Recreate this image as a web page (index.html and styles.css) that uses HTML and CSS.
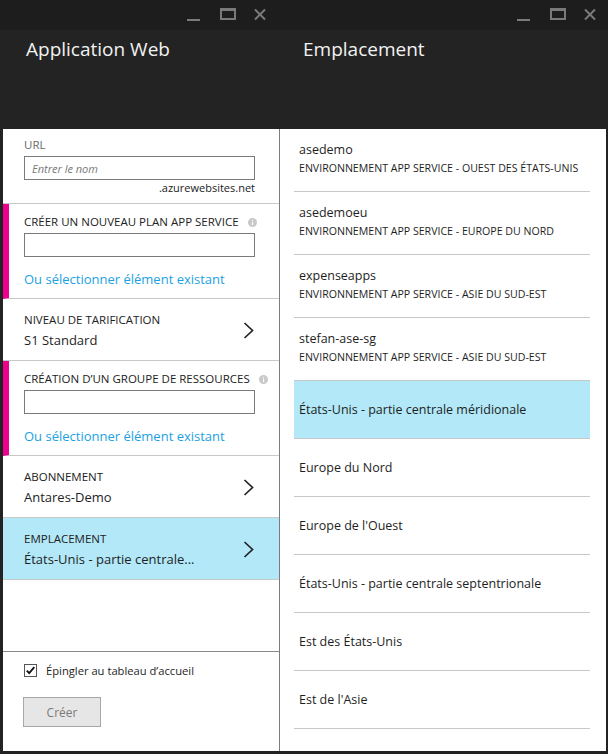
FILE: index.html
```html
<!DOCTYPE html>
<html lang="fr">
<head>
<meta charset="utf-8">
<title>Application Web</title>
<link rel="stylesheet" href="styles.css">
</head>
<body>
<div class="page">
  <section class="blade blade-form">
    <header class="blade-header">
      <div class="topbar">
        <svg class="controls controls-left" width="80" height="30" viewBox="0 0 80 30">
          <rect x="0" y="19" width="13" height="2" fill="#7a7a7a"/>
          <rect x="34" y="9" width="14" height="10" fill="none" stroke="#7a7a7a" stroke-width="2"/>
          <rect x="33" y="8" width="16" height="3" fill="#7a7a7a"/>
          <path d="M68 9.5 L78 19.5 M78 9.5 L68 19.5" stroke="#7a7a7a" stroke-width="2"/>
        </svg>
      </div>
      <h1 class="blade-title">Application Web</h1>
    </header>
    <div class="blade-body form-body">
      <div class="field field-url">
        <div class="label label-muted">URL</div>
        <div class="input"><span class="placeholder">Entrer le nom</span></div>
        <div class="suffix">.azurewebsites.net</div>
      </div>
      <div class="field field-required">
        <div class="label-row">
          <span class="label">CRÉER UN NOUVEAU PLAN APP SERVICE</span>
          <svg class="info" width="9" height="9" viewBox="0 0 9 9"><circle cx="4.5" cy="4.5" r="4.5" fill="#c9c9c9"/><rect x="4" y="3.8" width="1.1" height="3.3" fill="#fff"/><rect x="4" y="1.9" width="1.1" height="1.1" fill="#fff"/></svg>
        </div>
        <div class="input"></div>
        <a class="link">Ou sélectionner élément existant</a>
      </div>
      <div class="nav-row">
        <div class="nav-text">
          <div class="label">NIVEAU DE TARIFICATION</div>
          <div class="value">S1 Standard</div>
        </div>
        <svg class="chevron" width="11" height="17" viewBox="0 0 11 17"><path d="M1.5 1 L9.5 8.5 L1.5 16" fill="none" stroke="#222" stroke-width="1.7"/></svg>
      </div>
      <div class="field field-required">
        <div class="label-row">
          <span class="label">CRÉATION D’UN GROUPE DE RESSOURCES</span>
          <svg class="info" width="9" height="9" viewBox="0 0 9 9"><circle cx="4.5" cy="4.5" r="4.5" fill="#c9c9c9"/><rect x="4" y="3.8" width="1.1" height="3.3" fill="#fff"/><rect x="4" y="1.9" width="1.1" height="1.1" fill="#fff"/></svg>
        </div>
        <div class="input"></div>
        <a class="link">Ou sélectionner élément existant</a>
      </div>
      <div class="nav-row">
        <div class="nav-text">
          <div class="label">ABONNEMENT</div>
          <div class="value">Antares-Demo</div>
        </div>
        <svg class="chevron" width="11" height="17" viewBox="0 0 11 17"><path d="M1.5 1 L9.5 8.5 L1.5 16" fill="none" stroke="#222" stroke-width="1.7"/></svg>
      </div>
      <div class="nav-row nav-row-selected">
        <div class="nav-text">
          <div class="label">EMPLACEMENT</div>
          <div class="value">États-Unis - partie centrale...</div>
        </div>
        <svg class="chevron" width="11" height="17" viewBox="0 0 11 17"><path d="M1.5 1 L9.5 8.5 L1.5 16" fill="none" stroke="#222" stroke-width="1.7"/></svg>
      </div>
      <div class="spacer"></div>
      <footer class="form-footer">
        <label class="check-row">
          <svg class="checkbox" width="13" height="13" viewBox="0 0 13 13"><rect x="0.5" y="0.5" width="12" height="12" fill="#fff" stroke="#555"/><path d="M2.8 6.6 L5.2 9.2 L10.3 3.2" fill="none" stroke="#111" stroke-width="1.8"/></svg>
          <span>Épingler au tableau d’accueil</span>
        </label>
        <button class="btn" type="button">Créer</button>
      </footer>
    </div>
  </section>

  <section class="blade blade-list">
    <header class="blade-header">
      <div class="topbar">
        <svg class="controls controls-right" width="80" height="30" viewBox="0 0 80 30">
          <rect x="0" y="19" width="13" height="2" fill="#7a7a7a"/>
          <rect x="34" y="9" width="14" height="10" fill="none" stroke="#7a7a7a" stroke-width="2"/>
          <rect x="33" y="8" width="16" height="3" fill="#7a7a7a"/>
          <path d="M68 9.5 L78 19.5 M78 9.5 L68 19.5" stroke="#7a7a7a" stroke-width="2"/>
        </svg>
      </div>
      <h1 class="blade-title">Emplacement</h1>
    </header>
    <div class="blade-body list-body">
      <ul class="loc-list">
        <li class="loc loc-ase"><div class="loc-name">asedemo</div><div class="loc-sub">ENVIRONNEMENT APP SERVICE - OUEST DES ÉTATS-UNIS</div></li>
        <li class="loc loc-ase"><div class="loc-name">asedemoeu</div><div class="loc-sub">ENVIRONNEMENT APP SERVICE - EUROPE DU NORD</div></li>
        <li class="loc loc-ase"><div class="loc-name">expenseapps</div><div class="loc-sub">ENVIRONNEMENT APP SERVICE - ASIE DU SUD-EST</div></li>
        <li class="loc loc-ase"><div class="loc-name">stefan-ase-sg</div><div class="loc-sub">ENVIRONNEMENT APP SERVICE - ASIE DU SUD-EST</div></li>
        <li class="loc loc-region loc-selected"><div class="loc-name">États-Unis - partie centrale méridionale</div></li>
        <li class="loc loc-region"><div class="loc-name">Europe du Nord</div></li>
        <li class="loc loc-region"><div class="loc-name">Europe de l'Ouest</div></li>
        <li class="loc loc-region"><div class="loc-name">États-Unis - partie centrale septentrionale</div></li>
        <li class="loc loc-region"><div class="loc-name">Est des États-Unis</div></li>
        <li class="loc loc-region"><div class="loc-name">Est de l'Asie</div></li>
      </ul>
    </div>
  </section>
</div>
</body>
</html>
```

FILE: styles.css
```css
* { box-sizing: border-box; }

html, body {
  margin: 0;
  padding: 0;
  height: 754px;
  overflow: hidden;
}

body {
  background: linear-gradient(#1d1d1d 0, #1d1d1d 30px, #232323 30px, #232323 100%);
  font-family: "Open Sans", "Noto Sans", sans-serif;
  color: #1e1e1e;
}

.page {
  display: grid;
  grid-template-columns: 277px 326px;
  height: 754px;
  padding: 0 2px 3px 3px;
}

.blade {
  display: flex;
  flex-direction: column;
  min-height: 0;
}

.blade-header {
  height: 129px;
  flex: none;
}

.topbar {
  height: 30px;
  display: flex;
  justify-content: flex-end;
}

.controls { display: block; }
.controls-left { margin-right: 13px; }
.controls-right { margin-right: 9px; }

.blade-title {
  margin: 0;
  padding: 5px 0 0 23px;
  font-size: 19px;
  line-height: 28px;
  font-weight: 400;
  color: #f2f2f2;
}

.blade-body {
  flex: 1;
  background: #fff;
  min-height: 0;
}

.form-body {
  display: flex;
  flex-direction: column;
  border-right: 1px solid #7c7c7c;
}

.label {
  font-size: 11.5px;
  line-height: 16px;
  color: #222;
  white-space: nowrap;
}

.label-muted { color: #6a6a6a; }

.field {
  height: 75px;
  padding: 8px 24px 0 21px;
  border-bottom: 1px solid #c8c8c8;
  display: flex;
  flex-direction: column;
  flex: none;
}

.field-url .input { margin-top: 3px; }

.input {
  height: 24px;
  border: 1px solid #7a7a7a;
  background: #fff;
  padding: 0 7px;
  display: flex;
  align-items: center;
}

.placeholder {
  font-size: 11px;
  font-style: italic;
  color: #777;
}

.suffix {
  font-size: 11px;
  line-height: 16px;
  text-align: right;
  color: #222;
}

.field-required {
  height: 95px;
  border-left: 6px solid #ec008c;
  padding: 10px 24px 0 15px;
}

.label-row {
  display: flex;
  align-items: center;
  gap: 9px;
  height: 16px;
  margin-bottom: 3px;
}

.info { display: block; flex: none; }

.link {
  margin-top: 12px;
  font-size: 13px;
  line-height: 20px;
  color: #1ba1e2;
  cursor: pointer;
}

.nav-row {
  height: 62px;
  flex: none;
  display: flex;
  align-items: center;
  justify-content: space-between;
  padding: 3px 25px 0 21px;
  border-bottom: 1px solid #c8c8c8;
}

.nav-row-selected { background: #b2e8f8; }

.nav-text .label { margin-bottom: 2px; }

.value {
  font-size: 13px;
  line-height: 20px;
  color: #1e1e1e;
  white-space: nowrap;
}

.chevron { display: block; flex: none; margin-top: -2px; }

.spacer { flex: 1; }

.form-footer {
  border-top: 1px solid #8a8a8a;
  padding: 10px 24px 24px 20px;
}

.check-row {
  display: flex;
  align-items: center;
  height: 16px;
  gap: 9px;
  font-size: 11.2px;
  color: #1e1e1e;
  padding-left: 1px;
}

.checkbox { display: block; flex: none; }

.btn {
  display: block;
  margin-top: 19px;
  width: 78px;
  height: 30px;
  border: 1px solid #a8a8a8;
  background: #e6e6e6;
  color: #7a7a7a;
  font-family: inherit;
  font-size: 12px;
  padding: 0;
}

.list-body {
  padding: 0 16px 0 14px;
}

.loc-list {
  list-style: none;
  margin: 0;
  padding: 0;
}

.loc {
  border-bottom: 1px solid #c8c8c8;
  padding: 0 5px;
}

.loc-ase {
  padding-top: 12px;
  height: 63px;
}

.loc-region {
  height: 58px;
  display: flex;
  align-items: center;
}

.loc-selected { background: #b2e8f8; }

.loc-name {
  font-size: 12.5px;
  line-height: 18px;
  color: #1e1e1e;
  white-space: nowrap;
}

.loc-sub {
  font-size: 10.6px;
  line-height: 18px;
  color: #1e1e1e;
  white-space: nowrap;
}
```
